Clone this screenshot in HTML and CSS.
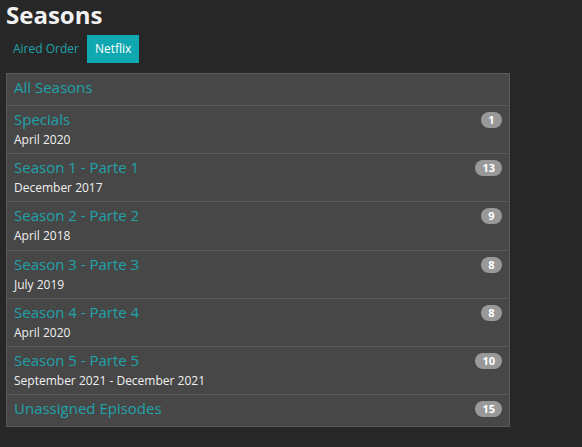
FILE: index.html
```html
<!DOCTYPE html>
<html>
<head>
	<title>Seasons</title>
	<link rel="stylesheet" href="styles.css">
</head>
<body>
	<div id="wrapper">
		<h1>Seasons</h1>
		<ul class="tabs">
			<li><a href="#">Aired Order</a></li>
			<li class="active"><a href="#">Netflix</a></li>
		</ul>

		<ul class="seasons">
			<li class="season single">
				<div class="top"><a href="#">All Seasons</a></div>
			</li>
			<li class="season">
				<div class="top"><a href="#">Specials</a><span class="badge">1</span></div>
				<div class="date">April 2020</div>
			</li>
			<li class="season">
				<div class="top"><a href="#">Season 1 - Parte 1</a><span class="badge">13</span></div>
				<div class="date">December 2017</div>
			</li>
			<li class="season">
				<div class="top"><a href="#">Season 2 - Parte 2</a><span class="badge">9</span></div>
				<div class="date">April 2018</div>
			</li>
			<li class="season">
				<div class="top"><a href="#">Season 3 - Parte 3</a><span class="badge">8</span></div>
				<div class="date">July 2019</div>
			</li>
			<li class="season">
				<div class="top"><a href="#">Season 4 - Parte 4</a><span class="badge">8</span></div>
				<div class="date">April 2020</div>
			</li>
			<li class="season">
				<div class="top"><a href="#">Season 5 - Parte 5</a><span class="badge">10</span></div>
				<div class="date">September 2021 - December 2021</div>
			</li>
			<li class="season single">
				<div class="top"><a href="#">Unassigned Episodes</a><span class="badge">15</span></div>
			</li>
		</ul>
	</div>
</body>
</html>
```

FILE: styles.css
```css
html {
	font-family: "Open Sans", sans-serif;
	background-color: #272727;
}
body {
	margin: 0;
}
#wrapper {
	padding: 0 6px;
}

h1 {
	margin: 0;
	font-size: 24px;
	line-height: 30px;
	font-weight: bold;
	color: #f2f2f2;
}

a {
	text-decoration: none;
	color: #1fa2aa;
}

.tabs {
	display: flex;
	margin: 5px 0 10px -1px;
	padding: 0;
	list-style: none;
}
.tabs li a {
	display: block;
	padding: 0 8px;
	font-size: 12px;
	line-height: 28px;
}
.tabs li.active a {
	background-color: #10a8b0;
	color: #fff;
}

.seasons {
	width: 502px;
	margin: 0;
	padding: 0;
	list-style: none;
	background-color: #474747;
	border: 1px solid #5a5a5a;
}
.season {
	padding: 2px 7px 3px 7px;
	border-top: 1px solid #5a5a5a;
}
.season:first-child {
	border-top: none;
}
.season.single {
	padding-bottom: 7px;
}
.season .top {
	display: flex;
	justify-content: space-between;
	align-items: center;
	font-size: 15px;
	line-height: 22px;
}
.season .date {
	font-size: 12px;
	line-height: 20.2px;
	color: #f0f0f0;
}

.badge {
	min-width: 7px;
	margin-top: 2px;
	padding: 0 7px;
	border-radius: 8px;
	background-color: #999;
	color: #fff;
	font-size: 11px;
	font-weight: bold;
	line-height: 16px;
	text-align: center;
}
```
